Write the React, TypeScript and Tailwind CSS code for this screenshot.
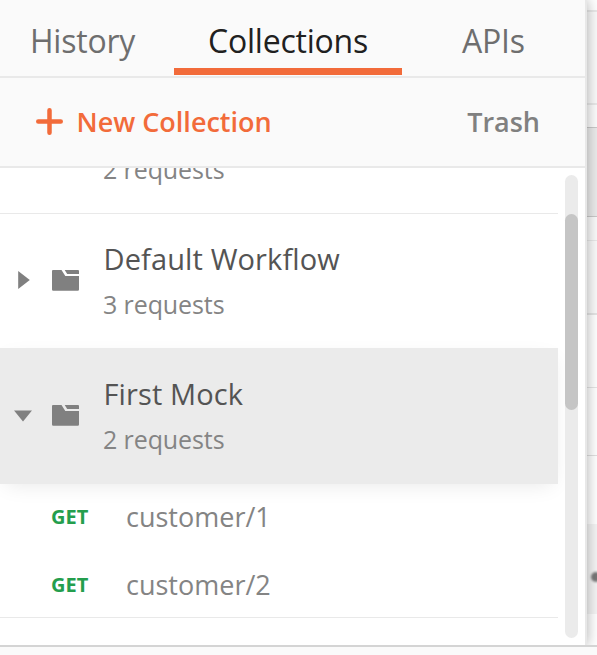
import React from "react";

function Folder() {
  return (
    <svg width="27" height="21" viewBox="0 0 27 21" className="-mt-px ml-[52px] block" fill="#808080">
      <path d="M1 0H9.5L13.3 6H27V19.5Q27 20.7 25.8 20.7H1.2Q0 20.7 0 19.5V1Q0 0 1 0Z" />
      <path d="M12.7 0H26Q27 0 27 1V4H15.2Z" />
    </svg>
  );
}

function Arrow({ open }: { open: boolean }) {
  return (
    <svg width="20" height="20" viewBox="0 0 20 20" className="-mt-0.5 ml-[14px] block" fill="#808080">
      {open ? <path d="M0 5.5H18L9 16.5Z" /> : <path d="M4.2 1L15.8 10L4.2 19Z" />}
    </svg>
  );
}

function CollectionRow({ name, count, open }: { name: string; count: string; open: boolean }) {
  return (
    <div
      className={
        open
          ? "flex h-[136px] w-[558px] items-center bg-[#ebebeb] shadow-[0_6px_20px_-6px_rgba(0,0,0,0.1)]"
          : "flex h-[134px] w-[558px] items-center"
      }
    >
      <div className="w-0">
        <Arrow open={open} />
      </div>
      <Folder />
      <div className="ml-[24px]">
        <div className="ml-[0.5px] h-[46px] text-[29px] leading-[46px] tracking-[0.12px] text-[#545454]">{name}</div>
        <div className="h-[45px] text-[25px] leading-[45px] tracking-[-0.1px] text-[#848484]">{count}</div>
      </div>
    </div>
  );
}

function RequestRow({ name, first = false }: { name: string; first?: boolean }) {
  return (
    <div className="flex h-[67px] items-center">
      <span
        className={
          first
            ? "-mt-0.5 ml-[51px] w-[75px] text-[20px] leading-[66px] font-bold text-[#249e4d]"
            : "ml-[51px] w-[75px] text-[20px] leading-[66px] font-bold text-[#249e4d]"
        }
      >
        GET
      </span>
      <span
        className={
          first
            ? "-mt-px text-[27px] leading-[66px] text-[#848484]"
            : "text-[27px] leading-[66px] text-[#848484]"
        }
      >
        {name}
      </span>
    </div>
  );
}

export default function App() {
  return (
    <div className="flex h-[655px] w-[597px] flex-col overflow-hidden bg-[#fafafa] font-['Open_Sans',sans-serif]">
      <div className="flex h-[645px]">
        <div className="z-10 flex w-[587px] flex-none flex-col border-r-2 border-[#e8e8e8] bg-white shadow-[0_0_13px_rgba(0,0,0,0.32)]">
          <div className="flex h-[78px] flex-none border-b-2 border-[#e9e9e9] bg-[#fafafa] text-[32px] leading-[81px] tracking-[-0.22px] text-[#6e6e6e]">
            <div className="w-[174px] pl-[30px]">History</div>
            <div className="h-[75px] w-[228px] border-b-[7px] border-[#f26b3a] pl-[34px] text-[#202020]">Collections</div>
            <div className="pl-[60px]">APIs</div>
          </div>
          <div className="flex h-[90px] flex-none items-center border-b-2 border-[#e9e9e9] bg-[#fafafa] text-[27px] font-semibold">
            <svg width="27" height="27" viewBox="0 0 27 27" className="-mt-0.5 ml-9 block" stroke="#f26b3a" strokeWidth="4.5" strokeLinecap="round">
              <path d="M13.5 2.25V24.75M2.25 13.5H24.75" />
            </svg>
            <span className="ml-[13.5px] text-[#f26b3a]">New Collection</span>
            <span className="mr-[45px] ml-auto text-[#808080]">Trash</span>
          </div>
          <div className="flex h-[477px] overflow-hidden">
            <div className="w-[558px]">
              <div className="h-[46px] overflow-hidden border-b border-[#e9e9e9] pl-[103px] text-[25px] leading-[45px] tracking-[-0.1px] text-[#848484]">
                <div className="-mt-[21px]">2 requests</div>
              </div>
              <CollectionRow name="Default Workflow" count="3 requests" open={false} />
              <CollectionRow name="First Mock" count="2 requests" open />
              <div className="h-[134px] border-b border-[#e9e9e9]">
                <RequestRow name="customer/1" first />
                <RequestRow name="customer/2" />
              </div>
            </div>
            <div className="mt-[7px] ml-[7px] h-[463px] w-[13px] rounded-full bg-[#ebebeb] pt-[39px]">
              <div className="h-[196px] rounded-full bg-[#c5c5c5]" />
            </div>
          </div>
        </div>
        <div className="flex w-[10px] flex-col bg-white">
          <div className="h-3 border-b-2 border-[#e9e9e9]" />
          <div className="h-[93px] border-b-2 border-[#e9e9e9] bg-[#fafafa]" />
          <div className="h-[23px] border-b border-[#c9c9c9] bg-[#fcfcfc]" />
          <div className="h-[89px] border-b border-[#c9c9c9] bg-[#ebebeb]" />
          <div className="h-6 border-b border-[#e9e9e9] bg-[#fafafa]" />
          <div className="h-[74px] border-b-2 border-[#e5e5e5] bg-[#fafafa]" />
          <div className="h-[73px] border-b border-[#e5e5e5]" />
          <div className="h-[68px] border-b border-[#e0e0e0]" />
          <div className="h-[68px]" />
          <div className="h-[90px] overflow-hidden bg-[#f4f4f4] pt-[48px] pl-1">
            <div className="h-[10px] w-[10px] rounded-full bg-[#777] blur-[1px]" />
          </div>
        </div>
      </div>
      <div className="z-20 h-[10px] border-t-2 border-[#d4d4d4] bg-[#fafafa]" />
    </div>
  );
}
